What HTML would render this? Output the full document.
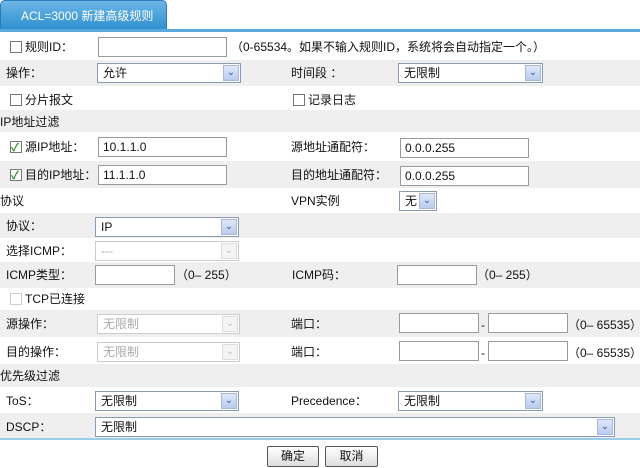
<!DOCTYPE html><html><head><meta charset="utf-8"><style>
*{box-sizing:border-box;margin:0;padding:0}
body{width:640px;height:468px;background:#fff;position:relative;overflow:hidden;font-family:"Liberation Sans","Noto Sans CJK SC",sans-serif;font-size:12px;color:#111}
.a{position:absolute}
.row{position:absolute;left:0;width:640px}
.g{background:#efefef}
.t{position:absolute;line-height:14px;white-space:nowrap}
.in{position:absolute;height:20px;border:1px solid #9a9a9a;background:#fff;padding-left:4px;line-height:18px;font-size:12px}
.sel{position:absolute;height:20px;border:1px solid #8a9ab0;background:#fff;padding-left:5px;line-height:18px}
.sel i{position:absolute;right:1px;top:1px;width:16px;height:16px;background:linear-gradient(#dfe8f8,#b9cbee);border:1px solid #a8b8dc;font-style:normal;color:#3a5a9a;font-size:10px;text-align:center;line-height:14px}
.dis{border-color:#ccc;color:#aaa}
.dis i{background:#f4f4f4;border-color:#ddd;color:#bbb}
.cb{position:absolute;width:12px;height:12px;border:1px solid #777;background:#fff}
.cb.c::after{content:"✓";position:absolute;left:0;top:-3px;font-size:11px;color:#2a8a2a;font-weight:bold}
.btn{position:absolute;top:446px;height:21px;border:1px solid #555;background:linear-gradient(#fff,#ddd);text-align:center;line-height:19px;border-radius:2px}
</style></head><body>
<div class="a" style="left:0;top:0;width:167px;height:31px;background:linear-gradient(#6bb6e6,#2e8fcf);border-radius:5px 5px 0 0;border:1px solid #2a7ab8;color:#fff;font-size:12px;line-height:30px;padding-left:20px">ACL=3000 新建高级规则</div>
<div class="a" style="left:0;top:29px;width:640px;height:3px;background:#5aa8dc"></div>

<div class="row" style="top:60px;height:26px" class="g"></div>
<div class="row g" style="top:60px;height:26px"></div>
<div class="row g" style="top:110px;height:22px"></div>
<div class="row g" style="top:161px;height:27px"></div>
<div class="row g" style="top:213px;height:25px"></div>
<div class="row g" style="top:262px;height:26px"></div>
<div class="row g" style="top:310px;height:27px"></div>
<div class="row g" style="top:364px;height:23px"></div>
<div class="row g" style="top:413px;height:26px"></div>
<div class="a" style="left:0;top:438px;width:640px;height:2px;background:#9ccbe8"></div>

<div class="cb" style="left:10px;top:41px"></div><div class="t" style="left:25px;top:40px">规则ID：</div>
<div class="in" style="left:98px;top:37px;width:129px"></div>
<div class="t" style="left:231px;top:40px">（0-65534。如果不输入规则ID，系统将会自动指定一个。）</div>

<div class="t" style="left:6px;top:66px">操作：</div>
<div class="sel" style="left:97px;top:63px;width:144px">允许<i>⌄</i></div>
<div class="t" style="left:291px;top:66px">时间段 ：</div>
<div class="sel" style="left:398px;top:63px;width:145px">无限制<i>⌄</i></div>

<div class="cb" style="left:10px;top:94px"></div><div class="t" style="left:25px;top:93px">分片报文</div>
<div class="cb" style="left:293px;top:94px"></div><div class="t" style="left:308px;top:93px">记录日志</div>

<div class="t" style="left:0;top:115px">IP地址过滤</div>

<div class="cb c" style="left:10px;top:141px"></div><div class="t" style="left:25px;top:140px">源IP地址：</div>
<div class="in" style="left:98px;top:137px;width:129px">10.1.1.0</div>
<div class="t" style="left:291px;top:140px">源地址通配符：</div>
<div class="in" style="left:400px;top:138px;width:129px">0.0.0.255</div>

<div class="cb c" style="left:10px;top:169px"></div><div class="t" style="left:25px;top:168px">目的IP地址：</div>
<div class="in" style="left:98px;top:165px;width:129px">11.1.1.0</div>
<div class="t" style="left:291px;top:168px">目的地址通配符：</div>
<div class="in" style="left:400px;top:166px;width:129px">0.0.0.255</div>

<div class="t" style="left:0;top:194px">协议</div>
<div class="t" style="left:291px;top:194px">VPN实例</div>
<div class="sel" style="left:399px;top:191px;width:38px">无<i>⌄</i></div>

<div class="t" style="left:6px;top:219px">协议：</div>
<div class="sel" style="left:95px;top:217px;width:144px">IP<i>⌄</i></div>

<div class="t" style="left:6px;top:244px">选择ICMP：</div>
<div class="sel dis" style="left:95px;top:241px;width:144px">---<i>⌄</i></div>

<div class="t" style="left:6px;top:268px">ICMP类型：</div>
<div class="in" style="left:95px;top:265px;width:80px"></div>
<div class="t" style="left:176px;top:268px">（0– 255）</div>
<div class="t" style="left:292px;top:268px">ICMP码：</div>
<div class="in" style="left:397px;top:265px;width:80px"></div>
<div class="t" style="left:477px;top:268px">（0– 255）</div>

<div class="cb" style="left:10px;top:293px;border-color:#ccc"></div><div class="t" style="left:25px;top:292px">TCP已连接</div>

<div class="t" style="left:6px;top:317px">源操作：</div>
<div class="sel dis" style="left:97px;top:314px;width:143px">无限制<i>⌄</i></div>
<div class="t" style="left:291px;top:317px">端口：</div>
<div class="in" style="left:399px;top:313px;width:80px"></div>
<div class="t" style="left:481px;top:318px">-</div>
<div class="in" style="left:488px;top:313px;width:80px"></div>
<div class="t" style="left:568px;top:318px">（0– 65535）</div>

<div class="t" style="left:6px;top:345px">目的操作：</div>
<div class="sel dis" style="left:97px;top:342px;width:143px">无限制<i>⌄</i></div>
<div class="t" style="left:291px;top:345px">端口：</div>
<div class="in" style="left:399px;top:341px;width:80px"></div>
<div class="t" style="left:481px;top:346px">-</div>
<div class="in" style="left:488px;top:341px;width:80px"></div>
<div class="t" style="left:568px;top:346px">（0– 65535）</div>

<div class="t" style="left:0;top:369px">优先级过滤</div>

<div class="t" style="left:6px;top:394px">ToS：</div>
<div class="sel" style="left:95px;top:391px;width:144px">无限制<i>⌄</i></div>
<div class="t" style="left:291px;top:394px">Precedence：</div>
<div class="sel" style="left:398px;top:391px;width:145px">无限制<i>⌄</i></div>

<div class="t" style="left:6px;top:420px">DSCP：</div>
<div class="sel" style="left:95px;top:417px;width:520px">无限制<i>⌄</i></div>

<div class="btn" style="left:267px;width:52px">确定</div>
<div class="btn" style="left:325px;width:53px">取消</div>
</body></html>
